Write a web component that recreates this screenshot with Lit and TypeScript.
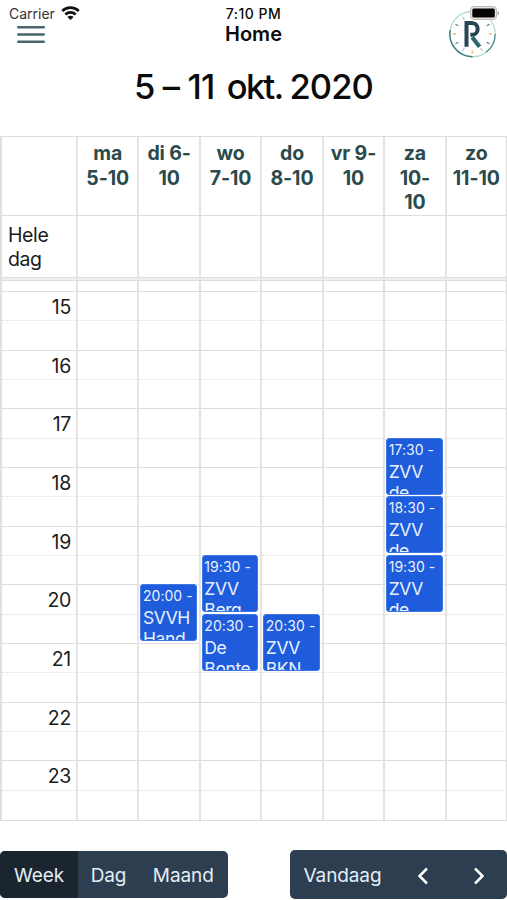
import { LitElement, html, css, svg } from "lit";
import { customElement } from "lit/decorators.js";
import { styleMap } from "lit/directives/style-map.js";

interface CalEvent { start: number; time: string; lines: string[]; }
interface Day { label: string[]; events: CalEvent[]; }

const FIRST_HOUR = 15;
const HOUR_PX = 58.67;
const LEAD_PX = 10;

const days: Day[] = [
  { label: ["ma", "5-10"], events: [] },
  { label: ["di 6-", "10"], events: [{ start: 20, time: "20:00 -", lines: ["SVVH", "Hand"] }] },
  { label: ["wo", "7-10"], events: [
    { start: 19.5, time: "19:30 -", lines: ["ZVV", "Berg"] },
    { start: 20.5, time: "20:30 -", lines: ["De", "Bonte"] },
  ] },
  { label: ["do", "8-10"], events: [{ start: 20.5, time: "20:30 -", lines: ["ZVV", "BKN"] }] },
  { label: ["vr 9-", "10"], events: [] },
  { label: ["za", "10-", "10"], events: [
    { start: 17.5, time: "17:30 -", lines: ["ZVV", "de"] },
    { start: 18.5, time: "18:30 -", lines: ["ZVV", "de"] },
    { start: 19.5, time: "19:30 -", lines: ["ZVV", "de"] },
  ] },
  { label: ["zo", "11-10"], events: [] },
];
const hours = [15, 16, 17, 18, 19, 20, 21, 22, 23];

@customElement("app-header")
export class AppHeader extends LitElement {
  static styles = css`
    :host { display: block; position: relative; height: 64px; color: #0b0b0b; }
    .status { display: grid; grid-template-columns: 1fr auto 1fr; align-items: center; height: 19px; padding: 4px 9px 0; font-size: 14px; }
    .carrier { display: flex; align-items: center; gap: 6px; color: #333; }
    .time { font-weight: 500; font-size: 14px; letter-spacing: 0.5px; }
    .bar { display: grid; grid-template-columns: 1fr auto 1fr; align-items: center; height: 22px; padding: 0 17px; }
    .title { font-size: 20px; line-height: 22px; font-weight: 600; }
    .menu { display: block; }
    .logo { position: absolute; left: 446px; top: 3px; }
  `;
  render() {
    const ticks = Array.from({ length: 12 }, (_, i) => i);
    return html`
      <div class="status">
        <span class="carrier">Carrier
          <svg width="19" height="15" viewBox="0 0 19 15" fill="none" stroke="#111" stroke-width="2.6">
            <path d="M1.2 5a12 12 0 0 1 16.6 0M4.3 8.5a7.5 7.5 0 0 1 10.4 0" />
            <path d="M9.5 14L6.4 11a4.4 4.4 0 0 1 6.2 0z" fill="#111" stroke="none" />
          </svg>
        </span>
        <span class="time">7:10 PM</span>
      </div>
      <div class="bar">
        <svg class="menu" width="28" height="18" viewBox="0 0 28 18" stroke="#47666a" stroke-width="2.4" stroke-linecap="round">
          <path d="M1.2 2.300h25.600M1.200 9.500h25.600M1.200 16.700h25.600" />
        </svg>
        <span class="title">Home</span>
      </div>
      <svg class="logo" width="58" height="58" viewBox="0 0 58 58" fill="none">
        <circle cx="26.5" cy="31" r="22.7" stroke="#a9d5cc" stroke-width="1.2" />
        <path d="M4.2 27A22.7 22.7 0 0 0 26.5 53.7" stroke="#3f7f80" stroke-width="1.4" />
        <path d="M49.2 31A22.7 22.7 0 0 1 40 49.3" stroke="#4f9190" stroke-width="1.2" />
        ${ticks.map((i) => svg`<path d="M26.5 11.3v3.4" transform="rotate(${i * 30} 26.5 31)"
          stroke=${i % 3 === 0 ? "#f6c48c" : i % 2 ? "#a8c8c8" : "#5b7f87"} stroke-width=${i % 3 === 0 ? 1.8 : 1.2} />`)}
        <path d="M20.500 43.700V20h5.300c7.800 0 7.800 11.800 0 11.800h-1.500" stroke="#264653" stroke-width="4" />
        <path d="M26.200 34.200L33.600 43.700" stroke="#2a6870" stroke-width="4.200" />
        <rect x="24.500" y="3.500" width="26" height="13" rx="3.500" fill="#e8e4e0" stroke="#b9b9b9" />
        <path d="M51.500 8c2 .5 2 4 0 4.500z" fill="#aaa" />
        <rect x="26.300" y="5.500" width="22.500" height="9" rx="1.500" fill="#050505" />
      </svg>`;
  }
}

@customElement("week-grid")
export class WeekGrid extends LitElement {
  static styles = css`
    :host { display: block; box-sizing: border-box; height: 685px; overflow: hidden; border: 1px solid #ddd; border-left: 2px solid #e0e0e0; color: #1c1c1c; }
    .row { display: grid; grid-template-columns: 74px repeat(7, minmax(0, 1fr)); }
    .row > * { box-sizing: border-box; border-left: 2px solid #e4e4e4; min-width: 0; }
    .row > :first-child { border-left: 0; }
    .head { box-sizing: border-box; height: 79px; border-bottom: 1px solid #ddd; font-size: 19.500px; line-height: 24.400px; font-weight: 700; letter-spacing: -0.1px; text-align: center; color: #2a4a4b; }
    .head > * { padding-top: 4.300px; }
    .line { display: block; white-space: nowrap; }
    .allday { height: 61px; font-size: 19.500px; line-height: 24.400px; letter-spacing: -0.4px; }
    .allday > :first-child { padding: 7px 6px; }
    .divider { height: 2px; border: solid #ddd; border-width: 1px 0; background: #eee; }
    .slots { height: 539px; }
    .axis { font-size: 19.500px; letter-spacing: -0.3px; }
    .lead { box-sizing: border-box; height: 11px; border-bottom: 1px solid #ddd; }
    .hour { box-sizing: border-box; height: 58.670px; border-bottom: 1px solid #ddd; }
    .hour:last-child, .day .hour:nth-child(10) { border-bottom: 0; }
    .half { box-sizing: border-box; height: 29.330px; border-bottom: 1px dotted #ddd; text-align: right; padding-right: 5px; line-height: 31px; }
    .day { position: relative; }
    .event { position: absolute; left: 1px; right: 2px; height: 57px; box-sizing: border-box; overflow: hidden; background: #1f5cdc; border: 1px solid #3b78e4; border-radius: 3px; color: #e9f1ff; padding: 0 1.500px; box-shadow: 0 0 0 1px #fff; }
    .start { display: block; font-size: 14px; line-height: 22px; letter-spacing: 0.050px; white-space: nowrap; }
    .name { display: block; font-size: 17.500px; line-height: 21px; letter-spacing: -0.4px; white-space: nowrap; }
  `;
  render() {
    return html`
      <div class="row head"><div></div>
        ${days.map((d) => html`<div>${d.label.map((l) => html`<span class="line">${l}</span>`)}</div>`)}
      </div>
      <div class="row allday"><div>Hele<br />dag</div>${days.map(() => html`<div></div>`)}</div>
      <div class="divider"></div>
      <div class="row slots">
        <div class="axis"><div class="lead"></div>
          ${hours.map((h) => html`<div class="hour"><div class="half">${h}</div></div>`)}
        </div>
        ${days.map((d) => html`<div class="day"><div class="lead"></div>
          ${hours.map(() => html`<div class="hour"><div class="half"></div></div>`)}
          ${d.events.map((e) => html`<div class="event" style=${styleMap({ top: `${LEAD_PX + (e.start - FIRST_HOUR) * HOUR_PX}px` })}>
            <span class="start">${e.time}</span>
            ${e.lines.map((l) => html`<span class="name">${l}</span>`)}
          </div>`)}
        </div>`)}
      </div>`;
  }
}

@customElement("app-root")
export class AppRoot extends LitElement {
  static styles = css`
    :host { display: flex; flex-direction: column; width: 507px; height: 900px; overflow: hidden; background: #fff; font-family: Inter, "Liberation Sans", sans-serif; }
    .range { margin: 0; height: 72px; line-height: 46px; font-size: 34.500px; font-weight: 500; letter-spacing: -0.88px; text-align: center; color: #0b0b0b; white-space: nowrap; }
    .month { letter-spacing: -1.600px; margin: 0 -1.500px 0 4px; }
    .tools { display: flex; justify-content: space-between; align-items: center; padding-top: 29px; font-size: 19px; letter-spacing: -0.1px; }
    .group { display: flex; height: 49px; border-radius: 5px; overflow: hidden; background: #2c3e50; }
    .views { height: 47px; }
    .btn { display: flex; align-items: center; justify-content: center; border: 0; padding: 2px 0 0; background: none; color: #e4edf5; font: inherit; letter-spacing: inherit; }
    .active { background: #1a252f; width: 78px; }
    .dag { width: 61px; }
    .maand { width: 88.500px; }
    .today { width: 105px; }
    .prev { width: 56px; }
    .next { width: 56px; }
  `;
  render() {
    return html`
      <app-header></app-header>
      <h2 class="range">5 – 11 <span class="month">okt.</span> 2020</h2>
      <week-grid></week-grid>
      <div class="tools">
        <div class="group views">
          <button class="btn active">Week</button><button class="btn dag">Dag</button><button class="btn maand">Maand</button>
        </div>
        <div class="group">
          <button class="btn today">Vandaag</button>
          <button class="btn prev"><svg width="12" height="18" viewBox="0 0 12 18" fill="none" stroke="#fff" stroke-width="2.500"><path d="M10 1.500L2.500 9l7.500 7.500" /></svg></button>
          <button class="btn next"><svg width="12" height="18" viewBox="0 0 12 18" fill="none" stroke="#fff" stroke-width="2.500"><path d="M2 1.500L9.500 9 2 16.500" /></svg></button>
        </div>
      </div>`;
  }
}
